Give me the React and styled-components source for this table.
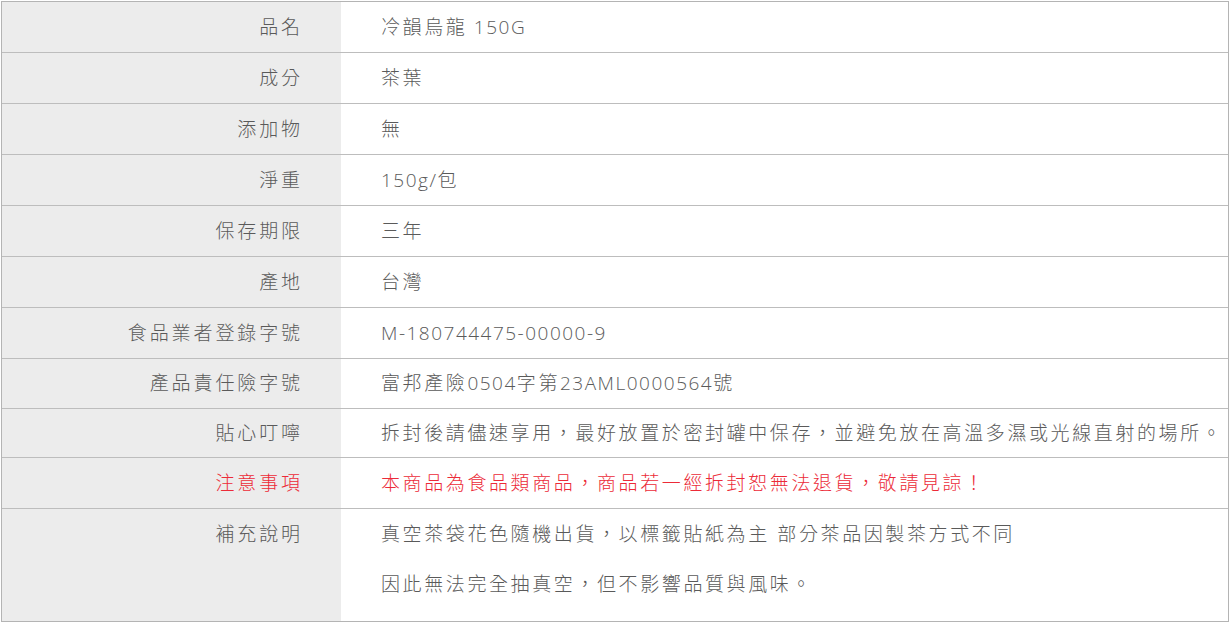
import React from "react";
import styled, { createGlobalStyle } from "styled-components";

const Global = createGlobalStyle`
  html, body { margin: 0; padding: 0; background: #fff; }
  body {
    font-family: "Open Sans", "Noto Sans CJK TC", sans-serif;
    font-weight: 300;
  }
`;

const Page = styled.div`
  padding: 1px;
`;

const Table = styled.div`
  border: 1px solid #b4b4b4;
  display: flex;
  flex-direction: column;
`;

const Row = styled.div`
  display: grid;
  grid-template-columns: 339px 1fr;
  height: ${(p) => p.$h}px;
  line-height: ${(p) => p.$lh || p.$h}px;
  overflow: hidden;
  border-bottom: ${(p) => (p.$last ? "none" : "1px solid #bdbdbd")};
  font-size: 19px;
  letter-spacing: 2.6px;
  color: ${(p) => (p.$red ? "#ec2b38" : "#5a5a5a")};
`;

const Label = styled.div`
  background: #ececec;
  text-align: right;
  padding-right: 38px;
  white-space: nowrap;
  letter-spacing: 2.9px;
`;

const Value = styled.div`
  padding-left: 40px;
  white-space: nowrap;
`;

const Line = styled.div``;

const Num = styled.span`
  letter-spacing: 1.5px;
`;

const rows = [
  { label: "品名", value: ["冷韻烏龍", <Num key="n"> 150G</Num>], h: 50 },
  { label: "成分", value: ["茶葉"], h: 50 },
  { label: "添加物", value: ["無"], h: 50 },
  { label: "淨重", value: [<Num key="n">150g/</Num>, "包"], h: 50 },
  { label: "保存期限", value: ["三年"], h: 50 },
  { label: "產地", value: ["台灣"], h: 50 },
  { label: "食品業者登錄字號", value: [<Num key="n">M-180744475-00000-9</Num>], h: 50 },
  {
    label: "產品責任險字號",
    value: [
      "富邦產險",
      <Num key="a">0504</Num>,
      "字第",
      <Num key="b">23AML0000564</Num>,
      "號",
    ],
    h: 49,
  },
  {
    label: "貼心叮嚀",
    value: ["拆封後請儘速享用，最好放置於密封罐中保存，並避免放在高溫多濕或光線直射的場所。"],
    h: 48,
  },
  {
    label: "注意事項",
    value: ["本商品為食品類商品，商品若一經拆封恕無法退貨，敬請見諒！"],
    h: 50,
    red: true,
  },
];

export default function App() {
  return (
    <Page>
      <Global />
      <Table>
        {rows.map((r) => (
          <Row key={r.label} $h={r.h} $red={r.red}>
            <Label>{r.label}</Label>
            <Value>
              <Line>{r.value}</Line>
            </Value>
          </Row>
        ))}
        <Row $h={112} $lh={50} $last>
          <Label>補充說明</Label>
          <Value>
            <Line>真空茶袋花色隨機出貨，以標籤貼紙為主 部分茶品因製茶方式不同</Line>
            <Line>因此無法完全抽真空，但不影響品質與風味。</Line>
          </Value>
        </Row>
      </Table>
    </Page>
  );
}
